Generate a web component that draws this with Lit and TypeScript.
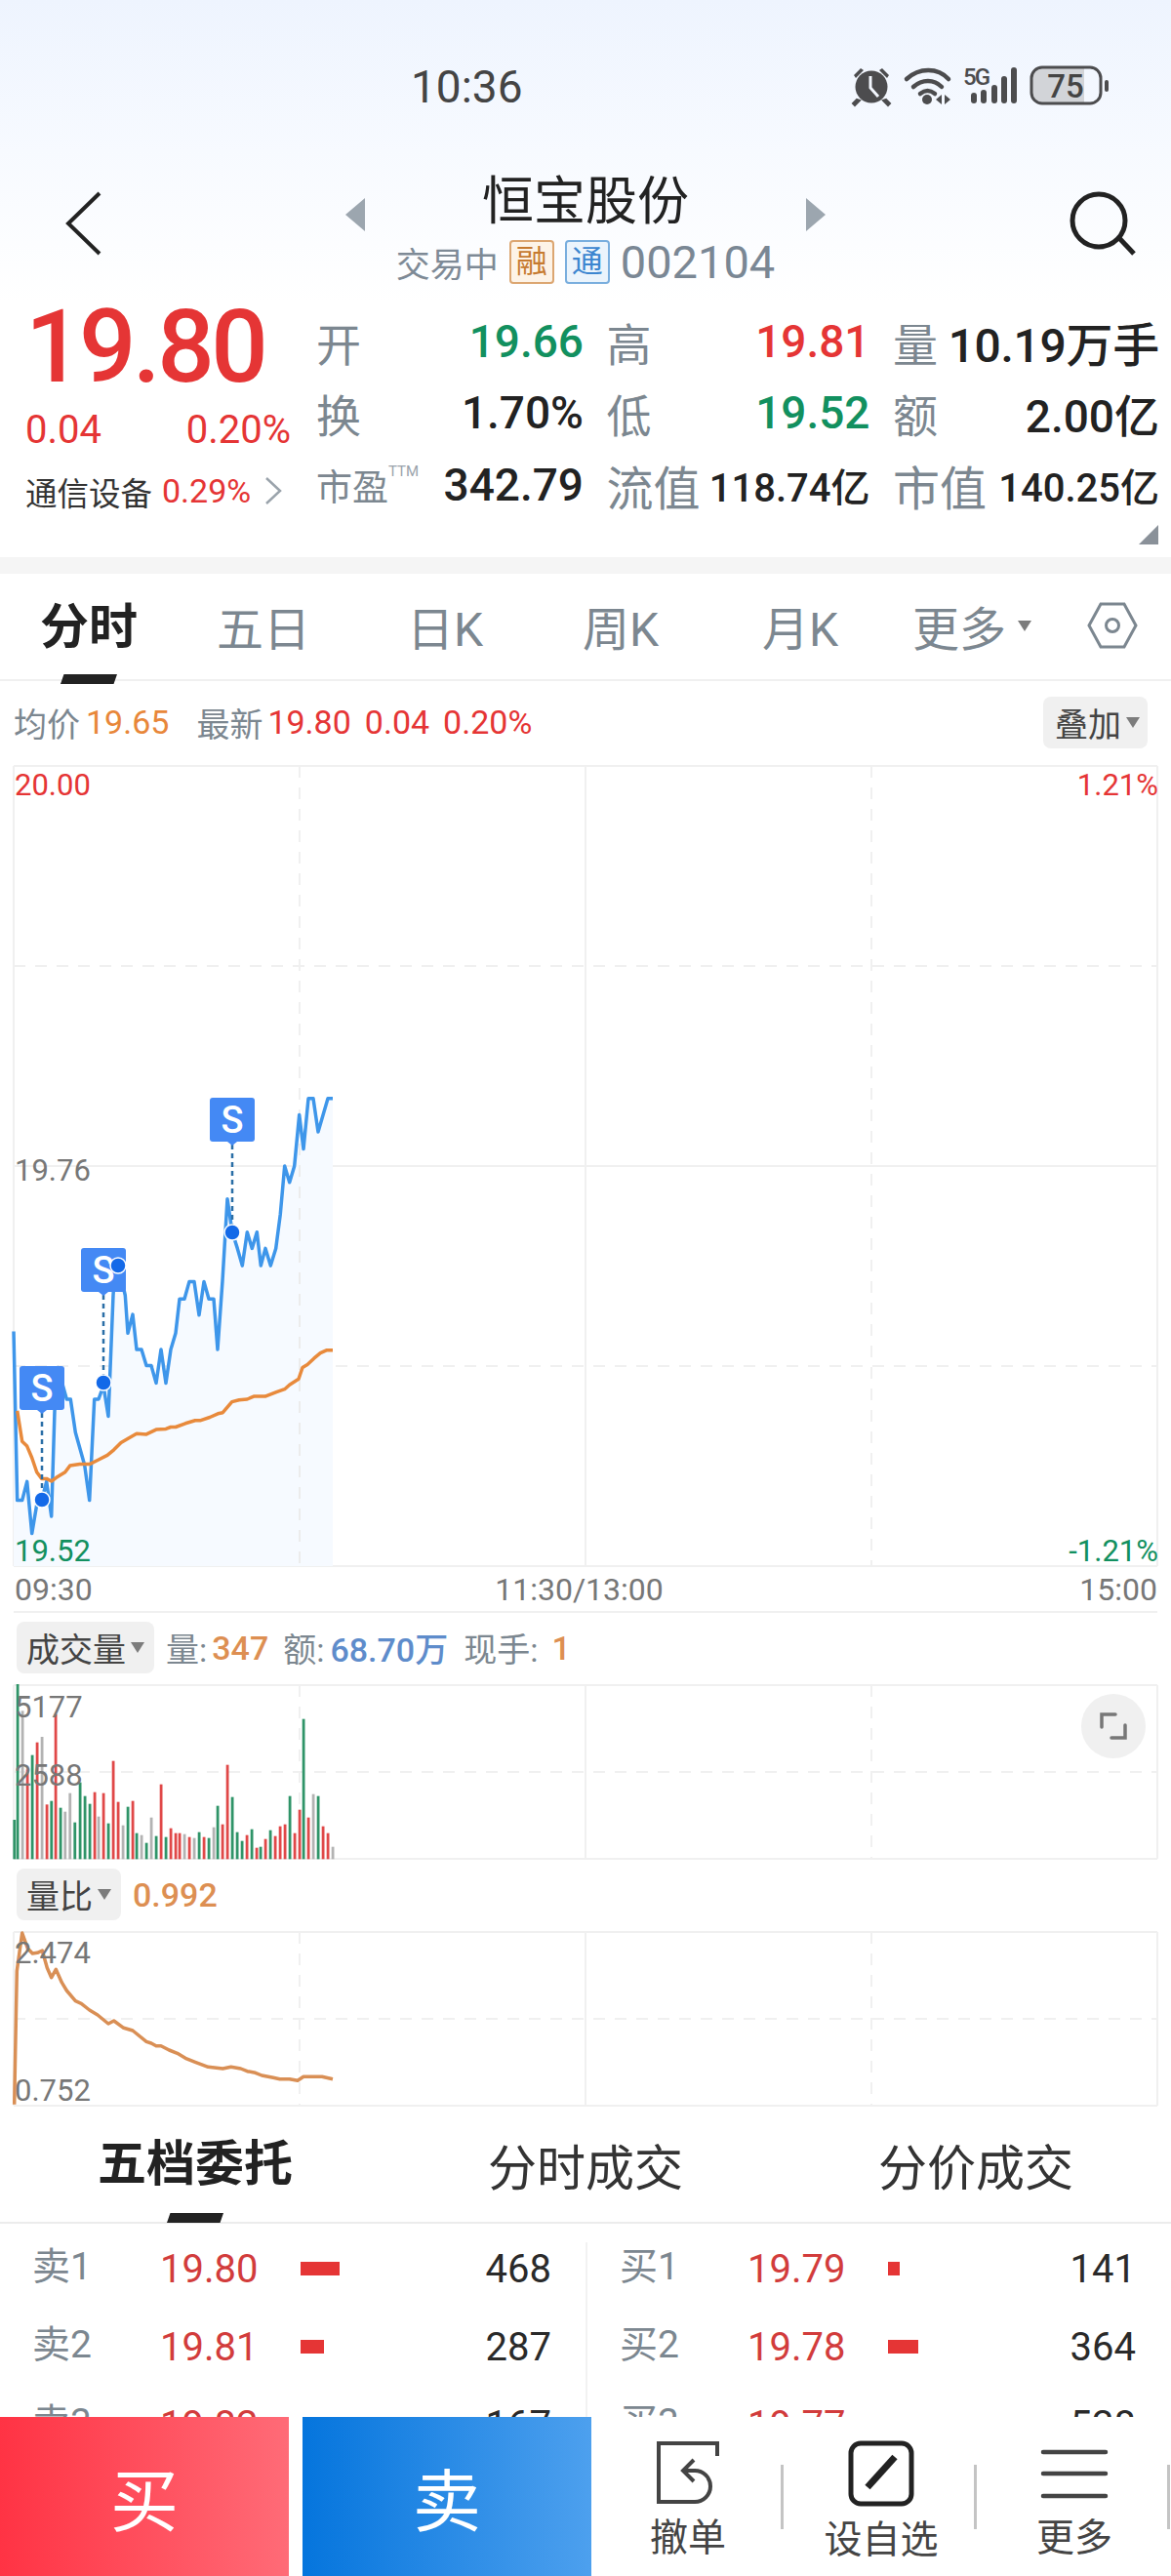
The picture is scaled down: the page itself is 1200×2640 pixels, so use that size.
import { LitElement, css, html, svg } from "lit";
import { customElement } from "lit/decorators.js";

const BLUE: number[][] = [
  [42, 850], [53, 1318], [68, 1318], [83, 1266], [98, 1410], [113, 1330], [128, 1318], [143, 1266],
  [158, 1362], [168, 1070], [178, 950], [205, 1038], [217, 1038], [232, 1130], [260, 1220], [275, 1318],
  [290, 1038], [303, 1038], [318, 1000], [333, 1085], [348, 750], [352, 700], [363, 665], [385, 750],
  [393, 855], [408, 803], [420, 900], [435, 900], [450, 945], [465, 945], [480, 993], [495, 900],
  [510, 993], [525, 900], [540, 855], [552, 760], [567, 760], [582, 712], [597, 712], [612, 805],
  [627, 712], [642, 760], [657, 760], [669, 900], [684, 710], [699, 483], [714, 575], [730, 620],
  [745, 668], [760, 575], [775, 620], [790, 575], [802, 668], [816, 620], [832, 668], [848, 620],
  [862, 525], [875, 392], [890, 437], [905, 392], [920, 250], [933, 345], [948, 205], [963, 205],
  [978, 297], [1008, 205], [1023, 205],
];
const ORANGE: number[][] = [
  [53, 1070], [68, 1155], [83, 1168], [98, 1200], [113, 1240], [128, 1258], [143, 1258], [158, 1265],
  [173, 1255], [200, 1240], [215, 1222], [245, 1218], [275, 1218], [300, 1207], [330, 1193], [350, 1178],
  [372, 1158], [395, 1146], [420, 1133], [450, 1135], [480, 1122], [510, 1120], [525, 1115], [540, 1115],
  [570, 1105], [600, 1097], [615, 1097], [645, 1088], [670, 1078], [685, 1075], [713, 1045], [735, 1040],
  [760, 1038], [780, 1030], [815, 1030], [850, 1018], [875, 1010], [890, 998], [918, 982], [930, 950],
  [945, 942], [965, 925], [985, 910], [1005, 902], [1023, 902],
];
const RATIO: number[][] = [
  [44, 770], [52, 360], [68, 243], [85, 290], [100, 306], [115, 304], [130, 297], [145, 350], [158, 380],
  [172, 355], [190, 395], [205, 420], [232, 452], [250, 460], [275, 480], [300, 495], [333, 522], [350, 513],
  [380, 535], [408, 543], [450, 577], [465, 582], [480, 590], [495, 590], [520, 603], [545, 613], [570, 628],
  [600, 640], [640, 655], [685, 660], [710, 655], [740, 660], [760, 668], [785, 673], [805, 681], [840, 688],
  [860, 692], [890, 692], [915, 697], [933, 685], [990, 685], [1023, 692],
];
// [x, top, colour] g = green, r = red, n = grey
const BARS: [number, number, string][] = [
  [44, 675, "g"], [54, 258, "g"], [69, 340, "n"], [84, 520, "r"], [99, 476, "g"], [114, 437, "r"], [129, 420, "n"],
  [144, 628, "r"], [158, 617, "g"], [171, 350, "r"], [186, 638, "g"], [200, 650, "n"], [215, 593, "n"], [230, 683, "g"],
  [246, 560, "g"], [261, 602, "g"], [276, 626, "g"], [291, 590, "r"], [303, 665, "n"], [318, 593, "r"], [333, 686, "g"],
  [348, 494, "r"], [363, 620, "r"], [378, 692, "n"], [393, 635, "g"], [408, 617, "r"], [420, 716, "g"], [435, 722, "n"],
  [450, 746, "g"], [465, 668, "n"], [480, 725, "g"], [495, 566, "r"], [510, 728, "g"], [525, 701, "r"], [540, 716, "r"],
  [552, 716, "r"], [567, 719, "n"], [582, 728, "r"], [597, 731, "n"], [612, 713, "g"], [627, 728, "r"], [642, 731, "g"],
  [657, 698, "n"], [669, 632, "g"], [684, 689, "r"], [699, 506, "r"], [714, 605, "g"], [729, 713, "g"], [744, 740, "g"],
  [759, 722, "r"], [774, 704, "g"], [789, 761, "r"], [801, 758, "g"], [816, 734, "r"], [831, 707, "g"], [846, 725, "r"],
  [861, 695, "r"], [876, 689, "r"], [891, 602, "g"], [906, 716, "r"], [921, 644, "r"], [933, 365, "g"], [948, 668, "r"],
  [963, 596, "n"], [978, 602, "g"], [993, 695, "r"], [1008, 716, "r"], [1023, 758, "n"],
];
const BAR_COLORS: Record<string, string> = { g: "#2f9468", r: "#e04848", n: "#b3b3b3" };

const mainPts = (list: number[][]) =>
  list.map(([x, y]) => [x / 3, y / 2.703 + 1050]);
const toStr = (list: number[][]) =>
  list.map(([x, y]) => `${x.toFixed(1)},${y.toFixed(1)}`).join(" ");

const ORDERS_SELL = [
  ["卖1", "19.80", 40, "468"],
  ["卖2", "19.81", 24, "287"],
  ["卖3", "19.82", 14, "167"],
];
const ORDERS_BUY = [
  ["买1", "19.79", 12, "141"],
  ["买2", "19.78", 31, "364"],
  ["买3", "19.77", 40, "528"],
];

// dashed/solid frame shared by the three chart panels
function grid(top: number, bottom: number, rows: number) {
  const step = (bottom - top) / rows;
  const lines = [];
  for (let i = 0; i <= rows; i++) {
    const y = top + step * i;
    const dashed = rows === 4 ? i % 2 === 1 : i === 1;
    lines.push(
      svg`<line x1="14" x2="1186" y1=${y} y2=${y} stroke="#f0f0f0" stroke-width="2" stroke-dasharray=${dashed ? "12 10" : "none"}></line>`
    );
  }
  return svg`${lines}
    <line x1="14" x2="14" y1=${top} y2=${bottom} stroke="#f0f0f0" stroke-width="2"></line>
    <line x1="307" x2="307" y1=${top} y2=${bottom} stroke="#f0f0f0" stroke-width="2" stroke-dasharray="12 10"></line>
    <line x1="600" x2="600" y1=${top} y2=${bottom} stroke="#f0f0f0" stroke-width="2"></line>
    <line x1="893" x2="893" y1=${top} y2=${bottom} stroke="#f0f0f0" stroke-width="2" stroke-dasharray="12 10"></line>
    <line x1="1186" x2="1186" y1=${top} y2=${bottom} stroke="#f0f0f0" stroke-width="2"></line>`;
}

function sTag(x: number, y: number, dotY: number) {
  return svg`
    <line x1=${x} x2=${x} y1=${y + 48} y2=${dotY} stroke="#2a6ea6" stroke-width="2.5" stroke-dasharray="5 4"></line>
    <rect x=${x - 23} y=${y} width="46" height="45" rx="3" fill="#4489f4"></rect>
    <path d="M${x - 5} ${y + 45}h10l-5 4z" fill="#4489f4"></path>
    <text x=${x} y=${y + 36} text-anchor="middle" font-size="38" font-weight="500" fill="#fff" font-family="Roboto, sans-serif">S</text>
    <circle cx=${x} cy=${dotY} r="8" fill="#1369e8" stroke="#fff" stroke-width="1.5"></circle>`;
}

@customElement("app-root")
export class AppRoot extends LitElement {
  static styles = css`
    :host {
      display: block;
      position: relative;
      width: 1200px;
      height: 2640px;
      overflow: hidden;
      background: #fff;
      font-family: Roboto, "Noto Sans CJK SC", sans-serif;
      color: #222;
    }
    svg {
      display: block;
    }
    .head {
      height: 310px;
      background: linear-gradient(180deg, #eef4fe 0%, #f7faff 50%, #fff 100%);
    }
    .status {
      height: 176px;
      display: flex;
      align-items: center;
      justify-content: space-between;
      padding-left: 421px;
      box-sizing: border-box;
    }
    .clock {
      font-size: 46px;
      color: #444;
      margin-top: 2px;
    }
    .status-icons {
      width: 1200px;
      height: 176px;
      margin-left: -534px;
      flex: none;
    }
    .nav {
      height: 134px;
      display: grid;
      grid-template-columns: 300px 600px 300px;
      position: relative;
    }
    .nav-back {
      margin: 20px 0 0 66px;
    }
    .nav-mid {
      display: flex;
      flex-direction: column;
      align-items: center;
    }
    .title {
      display: flex;
      align-items: center;
      justify-content: space-between;
      width: 492px;
      height: 60px;
      margin-top: 1px;
      font-size: 53px;
      color: #222;
      line-height: 60px;
    }
    .title svg {
      align-self: flex-end;
    }
    .sub {
      display: flex;
      align-items: center;
      gap: 11px;
      margin-top: 8px;
      height: 46px;
      font-size: 35px;
      color: #7e8a96;
    }
    .tag {
      box-sizing: border-box;
      width: 46px;
      height: 45px;
      border-radius: 4px;
      border: 2px solid;
      display: flex;
      align-items: center;
      justify-content: center;
      font-size: 32px;
      line-height: 1;
    }
    .tag.rong {
      border-color: #dca671;
      background: #fdf3e7;
      color: #c67a30;
    }
    .tag.tong {
      border-color: #79aede;
      background: #ebf4fc;
      color: #3c86d0;
    }
    .code {
      font-size: 47px;
      color: #7a8794;
    }
    .nav-search {
      margin: 20px 0 0 192px;
    }
    .stats {
      height: 261px;
      display: grid;
      grid-template-columns: 325px 1fr;
      position: relative;
      box-sizing: border-box;
    }
    .quote {
      padding-left: 26px;
    }
    .price {
      font-size: 103px;
      line-height: 96px;
      height: 96px;
      margin-top: -2px;
      font-weight: 500;
      color: #e53535;
      letter-spacing: -3.5px;
    }
    .delta {
      display: flex;
      justify-content: space-between;
      width: 272px;
      margin-top: 14px;
      height: 46px;
      line-height: 46px;
      font-size: 40px;
      color: #e53535;
    }
    .sector {
      display: flex;
      align-items: center;
      margin-top: 17px;
      height: 44px;
      font-size: 32.5px;
      color: #333;
      gap: 10px;
    }
    .sector b {
      font-weight: 400;
      color: #e53535;
      font-size: 34px;
    }
    .sector svg {
      margin-left: 3px;
    }
    .cells {
      display: grid;
      grid-template-columns: 274px 270px 273px;
      grid-auto-rows: 73.5px;
      column-gap: 23.5px;
      margin: 3px 0 0 -1px;
      align-items: center;
    }
    .cell {
      display: flex;
      justify-content: space-between;
      align-items: center;
      font-size: 46px;
      font-weight: 500;
      white-space: nowrap;
    }
    .cell > span:first-child {
      color: #7c8790;
      font-weight: 400;
    }
    .cell > .wide:first-child {
      font-size: 48px;
    }
    .cell .small {
      font-size: 40px;
    }
    .cell .lg {
      font-size: 48px;
      letter-spacing: -0.3px;
    }
    .cell .pe {
      font-size: 37px;
      display: flex;
      align-items: flex-start;
    }
    .cell .pe sup {
      font-size: 15px;
      line-height: 1;
      margin-top: 6px;
      color: #9aa3ab;
    }
    .up {
      color: #e53535;
    }
    .down {
      color: #12905f;
    }
    .corner {
      position: absolute;
      right: 13px;
      bottom: 13px;
      width: 20px;
      height: 20px;
      background: #8a9199;
      clip-path: polygon(100% 0, 100% 100%, 0 100%);
    }
    .band {
      height: 17px;
      background: #f5f5f5;
    }
    .tabs {
      position: relative;
      height: 110px;
      box-sizing: border-box;
      border-bottom: 2px solid #f0f0f0;
      display: grid;
      grid-template-columns: 182px 176px 196px 164px 204px 148px 130px;
      align-items: center;
      font-size: 48px;
      color: #7c8790;
      padding-bottom: 2px;
      text-align: center;
    }
    .tabs .on {
      position: relative;
      margin-top: 4px;
      font-size: 50px;
      font-weight: 700;
      color: #222;
      line-height: 60px;
    }
    .tabs .on::after {
      content: "";
      position: absolute;
      left: 62px;
      bottom: -28px;
      width: 58px;
      height: 10px;
      background: #222;
      clip-path: polygon(6% 0, 100% 0, 94% 100%, 0 100%);
    }
    .more {
      display: flex;
      align-items: center;
      justify-content: center;
      gap: 12px;
    }
    .caret {
      display: inline-block;
      width: 0;
      height: 0;
      border: 7px solid transparent;
      border-top: 11px solid #7c7c7c;
      border-bottom: 0;
    }
    .hex {
      margin-left: 44px;
    }
    .info {
      height: 86px;
      display: flex;
      align-items: center;
      padding: 0 24px 2px 14px;
      box-sizing: border-box;
      font-size: 34px;
      color: #7c8790;
      white-space: nowrap;
    }
    .info .gold {
      color: #e8873a;
      margin-left: 6px;
      margin-right: 28px;
    }
    .info .red {
      color: #e53535;
      margin-left: 5px;
    }
    .info .red + .red {
      margin-left: 14px;
    }
    .pick {
      display: inline-flex;
      align-items: center;
      justify-content: center;
      gap: 5px;
      height: 53px;
      padding: 0 8px 0 12px;
      background: #f0f0f0;
      border-radius: 8px;
      font-size: 34px;
      color: #444;
    }
    .info .pick {
      margin-left: auto;
    }
    .chart {
      position: relative;
    }
    .tick {
      position: absolute;
      font-size: 31px;
      line-height: 30px;
      color: #777;
    }
    .tick.up {
      color: #e53535;
    }
    .tick.down {
      color: #12905f;
    }
    .tick.right {
      right: 13px;
    }
    .tick.left {
      left: 15px;
    }
    .axis {
      height: 45px;
      display: flex;
      justify-content: space-between;
      align-items: center;
      padding: 0 14px 0 15px;
      box-sizing: border-box;
      font-size: 32px;
      color: #777;
    }
    .axis span:nth-child(2) {
      margin-right: 14px;
    }
    .rule {
      height: 2px;
      margin: 0 14px;
      background: #f0f0f0;
    }
    .ind {
      height: 73px;
      display: flex;
      align-items: center;
      padding: 0 0 2px 17px;
      font-size: 34px;
      color: #7c8790;
      white-space: nowrap;
      box-sizing: border-box;
    }
    .ind .pick {
      margin-right: 12px;
      padding: 0 10px 0 10px;
    }
    .ind .gold {
      color: #dd8f52;
      font-weight: 500;
      margin-right: 15px;
    }
    .ind .gap {
      margin-left: 5px;
    }
    .ind .gap-far {
      margin-left: 14px;
    }
    .ind .blue {
      color: #5e8ccb;
      font-weight: 500;
      margin: 0 16px 0 6px;
    }
    .expand {
      position: absolute;
      left: 1108px;
      top: 10px;
      width: 66px;
      height: 66px;
      border-radius: 50%;
      background: #f0f0f0;
      display: flex;
      align-items: center;
      justify-content: center;
    }
    .tabs2 {
      height: 120px;
      box-sizing: border-box;
      border-bottom: 2px solid #ececec;
      display: grid;
      grid-template-columns: 400px 400px 400px;
      align-items: center;
      text-align: center;
      font-size: 50px;
      color: #333;
    }
    .tabs2 .on {
      position: relative;
      font-weight: 700;
      color: #222;
      line-height: 60px;
    }
    .tabs2 .on::after {
      content: "";
      position: absolute;
      left: 171px;
      bottom: -30px;
      width: 58px;
      height: 10px;
      background: #222;
      clip-path: polygon(6% 0, 100% 0, 94% 100%, 0 100%);
    }
    .book {
      display: grid;
      grid-template-columns: 600px 600px;
      padding-top: 19px;
    }
    .side {
      display: flex;
      flex-direction: column;
      gap: 26px;
      padding: 0 35px 0 33px;
      box-sizing: border-box;
      height: 320px;
    }
    .side + .side {
      border-left: 2px solid #f2f2f2;
      padding: 0 36px 0 33px;
    }
    .row {
      height: 54px;
      display: grid;
      grid-template-columns: 131px 144px 1fr auto;
      align-items: center;
      color: #333;
    }
    .row .lb {
      font-size: 39px;
      line-height: 46px;
      margin-top: -5px;
      color: #7c8790;
    }
    .row .pr {
      color: #d23c3c;
      font-size: 40px;
    }
    .row .qt {
      font-size: 40px;
      color: #2a2a2a;
    }
    .meter {
      height: 14px;
      background: #e53535;
    }
    .dock {
      position: absolute;
      left: 0;
      bottom: 0;
      width: 1200px;
      height: 163px;
      background: #fff;
      display: grid;
      grid-template-columns: 296px 310px repeat(3, 198px);
    }
    .buy,
    .sell {
      display: flex;
      align-items: center;
      justify-content: center;
      color: #fff;
      font-size: 70px;
    }
    .buy {
      background: linear-gradient(90deg, #ff3344, #ff6b77);
    }
    .sell {
      margin-left: 14px;
      background: linear-gradient(90deg, #0575dd, #4da0ee);
    }
    .act {
      position: relative;
      display: flex;
      flex-direction: column;
      align-items: center;
      padding-top: 24px;
      font-size: 39px;
      line-height: 44px;
      color: #444;
    }
    .act svg {
      margin-bottom: 12px;
    }
    .act::after {
      content: "";
      position: absolute;
      right: 1px;
      top: 49px;
      width: 3px;
      height: 66px;
      background: #c4c4c4;
    }
  `;

  private _statusIcons() {
    const bars = [[993, 95], [1003, 92], [1014, 87], [1024, 78], [1034, 69]];
    return svg`<svg class="status-icons" viewBox="0 0 1200 176" aria-hidden="true">
      <g fill="#4c4c4e">
        <circle cx="891" cy="89" r="16.5"></circle>
        <path d="M873 77l7-7 3 2-8 8zM909 77l-7-7-3 2 8 8z"></path>
        <path d="M876 102l-4 4 2 2 5-5zM906 102l4 4-2 2-5-5z" stroke="#4c4c4e" stroke-width="2"></path>
      </g>
      <path d="M890 78v12l8 9" fill="none" stroke="#f3f7fe" stroke-width="3"></path>
      <g fill="none" stroke="#4c4c4e" stroke-width="4.5" stroke-linecap="round">
        <path d="M927 81c13-12 32-12 43 0"></path>
        <path d="M934 89c9-8 21-8 29 0"></path>
        <path d="M941 96c5-4 10-4 15 0"></path>
      </g>
      <circle cx="948" cy="102" r="5" fill="#4c4c4e"></circle>
      <path d="M957 102l6-5v10zM966 97l6 5-6 5z" fill="#4c4c4e"></path>
      <text x="985" y="87" font-size="24" font-weight="500" letter-spacing="-2" fill="#4c4c4e" font-family="Roboto, sans-serif">5G</text>
      ${bars.map(
        ([x, y]) => svg`<rect x=${x} y=${y} width="6" height=${106 - y} rx="3" fill="#4c4c4e"></rect>`
      )}
      <path d="M1066 69h43v37h-43a10 10 0 0 1-10-10v-17a10 10 0 0 1 10-10z" fill="#d2d4d8"></path>
      <rect x="1055" y="69" width="71" height="37" rx="11" fill="none" stroke="#4c4c4e" stroke-width="3"></rect>
      <rect x="1130" y="82" width="4" height="12" rx="2" fill="#4c4c4e"></rect>
      <text x="1090" y="100" text-anchor="middle" font-size="33" font-weight="500" fill="#444" font-family="Roboto, sans-serif">75</text>
    </svg>`;
  }

  private _priceChart() {
    const blue = mainPts(BLUE);
    const orange = mainPts(ORANGE);
    const area = [...blue, [341, 1605], [14, 1605]];
    return html`<svg width="1200" height="822" viewBox="0 784 1200 822" aria-hidden="true">
      ${grid(785, 1605, 4)}
      <polygon points=${toStr(area)} fill="#f6faff"></polygon>
      <line x1="307" x2="307" y1="1150" y2="1605" stroke="#ececec" stroke-width="2" stroke-dasharray="12 10"></line>
      <polyline points=${toStr(blue)} fill="none" stroke="#3e96ea" stroke-width="3.5" stroke-linejoin="round"></polyline>
      <polyline points=${toStr(orange)} fill="none" stroke="#e88a3c" stroke-width="3.5" stroke-linejoin="round"></polyline>
      ${sTag(43, 1400, 1537)}
      ${sTag(106, 1279, 1417)}
      <circle cx="121" cy="1297" r="8" fill="#1369e8" stroke="#fff" stroke-width="1.5"></circle>
      ${sTag(238, 1125, 1263)}
    </svg>`;
  }

  private _volumeChart() {
    return html`<svg width="1200" height="180" viewBox="0 1726 1200 180" aria-hidden="true">
      ${grid(1727, 1905, 2)}
      ${BARS.map(
        ([x, t, c]) => svg`<rect x=${x / 3 - 1.3} y=${1640 + t / 3} width="2.8" height=${(796 - t) / 3} fill=${BAR_COLORS[c]}></rect>`
      )}
    </svg>`;
  }

  private _ratioChart() {
    const pts = RATIO.map(([x, y]) => [x / 3, y / 3 + 1900]);
    return html`<svg width="1200" height="180" viewBox="0 1979 1200 180" aria-hidden="true">
      ${grid(1980, 2158, 2)}
      <polyline points=${toStr(pts)} fill="none" stroke="#d98f55" stroke-width="3.5" stroke-linejoin="round"></polyline>
    </svg>`;
  }

  private _side(rows: (string | number)[][]) {
    return html`<div class="side">
      ${rows.map(
        (r) => html`<div class="row">
          <span class="lb">${r[0]}</span>
          <span class="pr">${r[1]}</span>
          <span><div class="meter" style="width:${r[2]}px"></div></span>
          <span class="qt">${r[3]}</span>
        </div>`
      )}
    </div>`;
  }

  render() {
    return html`
      <section class="head">
        <div class="status">
          <span class="clock">10:36</span>
          ${this._statusIcons()}
        </div>
        <div class="nav">
          <svg class="nav-back" width="40" height="66" viewBox="0 0 40 66" aria-hidden="true">
            <path d="M36 2L4 33l32 31" fill="none" stroke="#222" stroke-width="4"></path>
          </svg>
          <div class="nav-mid">
            <div class="title">
              <svg width="20" height="34" viewBox="0 0 20 34" aria-hidden="true"><path d="M20 0v34L0 17z" fill="#9ca6af"></path></svg>
              <span>恒宝股份</span>
              <svg width="20" height="34" viewBox="0 0 20 34" aria-hidden="true"><path d="M0 0v34l20-17z" fill="#9ca6af"></path></svg>
            </div>
            <div class="sub">
              <span>交易中</span>
              <span class="tag rong">融</span>
              <span class="tag tong">通</span>
              <span class="code">002104</span>
            </div>
          </div>
          <svg class="nav-search" width="72" height="70" viewBox="0 0 72 70" aria-hidden="true">
            <circle cx="34" cy="30" r="27" fill="none" stroke="#222" stroke-width="5"></circle>
            <path d="M54 47l16 17" fill="none" stroke="#222" stroke-width="5"></path>
          </svg>
        </div>
      </section>

      <section class="stats">
        <div class="quote">
          <div class="price">19.80</div>
          <div class="delta"><span>0.04</span><span>0.20%</span></div>
          <div class="sector">
            <span>通信设备</span><b>0.29%</b>
            <svg width="20" height="30" viewBox="0 0 20 30" aria-hidden="true"><path d="M3 2l14 13L3 28" fill="none" stroke="#9aa3ab" stroke-width="2.5"></path></svg>
          </div>
        </div>
        <div class="cells">
          <div class="cell"><span>开</span><span class="down">19.66</span></div>
          <div class="cell"><span>高</span><span class="up">19.81</span></div>
          <div class="cell"><span>量</span><span class="lg">10.19万手</span></div>
          <div class="cell"><span>换</span><span>1.70%</span></div>
          <div class="cell"><span>低</span><span class="down">19.52</span></div>
          <div class="cell"><span>额</span><span>2.00亿</span></div>
          <div class="cell"><span class="pe">市盈<sup>TTM</sup></span><span>342.79</span></div>
          <div class="cell"><span class="wide">流值</span><span class="small">118.74亿</span></div>
          <div class="cell"><span class="wide">市值</span><span class="small">140.25亿</span></div>
        </div>
        <div class="corner"></div>
      </section>
      <div class="band"></div>

      <nav class="tabs">
        <span class="on">分时</span>
        <span>五日</span>
        <span>日K</span>
        <span>周K</span>
        <span>月K</span>
        <span class="more">更多<i class="caret"></i></span>
        <svg class="hex" width="52" height="48" viewBox="0 0 52 48" aria-hidden="true">
          <path d="M14 2h24l12 22-12 22H14L2 24z" fill="none" stroke="#7c8790" stroke-width="3"></path>
          <circle cx="26" cy="24" r="6.5" fill="none" stroke="#7c8790" stroke-width="3"></circle>
        </svg>
      </nav>

      <div class="info">
        <span>均价</span><span class="gold">19.65</span>
        <span>最新</span><span class="red">19.80</span><span class="red">0.04</span><span class="red">0.20%</span>
        <span class="pick">叠加<i class="caret"></i></span>
      </div>

      <div class="chart">
        ${this._priceChart()}
        <span class="tick left up" style="top:6px">20.00</span>
        <span class="tick right up" style="top:6px">1.21%</span>
        <span class="tick left" style="top:401px">19.76</span>
        <span class="tick left down" style="top:791px">19.52</span>
        <span class="tick right down" style="top:791px">-1.21%</span>
      </div>
      <div class="axis"><span>09:30</span><span>11:30/13:00</span><span>15:00</span></div>
      <div class="rule"></div>

      <div class="ind">
        <span class="pick">成交量<i class="caret"></i></span>
        <span>量:</span><span class="gold gap">347</span>
        <span>额:</span><span class="blue">68.70万</span>
        <span>现手:</span><span class="gold gap-far">1</span>
      </div>
      <div class="chart">
        ${this._volumeChart()}
        <span class="tick left" style="top:9px">5177</span>
        <span class="tick left" style="top:79px">2588</span>
        <div class="expand">
          <svg width="28" height="28" viewBox="0 0 28 28" aria-hidden="true">
            <path d="M2 15V2h14M26 13v13H12" fill="none" stroke="#777" stroke-width="3.5" stroke-linecap="round"></path>
          </svg>
        </div>
      </div>

      <div class="ind">
        <span class="pick">量比<i class="caret"></i></span>
        <span class="gold">0.992</span>
      </div>
      <div class="chart">
        ${this._ratioChart()}
        <span class="tick left" style="top:8px">2.474</span>
        <span class="tick left" style="top:149px">0.752</span>
      </div>

      <nav class="tabs2">
        <span class="on">五档委托</span>
        <span>分时成交</span>
        <span>分价成交</span>
      </nav>
      <div class="book">
        ${this._side(ORDERS_SELL)}
        ${this._side(ORDERS_BUY)}
      </div>

      <footer class="dock">
        <div class="buy">买</div>
        <div class="sell">卖</div>
        <div class="act">
          <svg width="66" height="66" viewBox="0 0 66 66" aria-hidden="true">
            <path d="M63 16V3H3v60h37a16 16 0 0 0 0-32H28" fill="none" stroke="#444" stroke-width="4"></path>
            <path d="M39 20L28 31l11 11" fill="none" stroke="#444" stroke-width="4"></path>
          </svg>
          <span>撤单</span>
        </div>
        <div class="act">
          <svg width="68" height="68" viewBox="0 0 68 68" aria-hidden="true">
            <rect x="3" y="3" width="62" height="62" rx="10" fill="none" stroke="#222" stroke-width="5"></rect>
            <path d="M20 48l28-31" fill="none" stroke="#222" stroke-width="7"></path>
          </svg>
          <span>设自选</span>
        </div>
        <div class="act">
          <svg width="70" height="66" viewBox="0 0 70 66" aria-hidden="true">
            <path d="M3 12h64M3 34h64M3 57h64" fill="none" stroke="#444" stroke-width="4.5" stroke-linecap="round"></path>
          </svg>
          <span>更多</span>
        </div>
      </footer>
    `;
  }
}
